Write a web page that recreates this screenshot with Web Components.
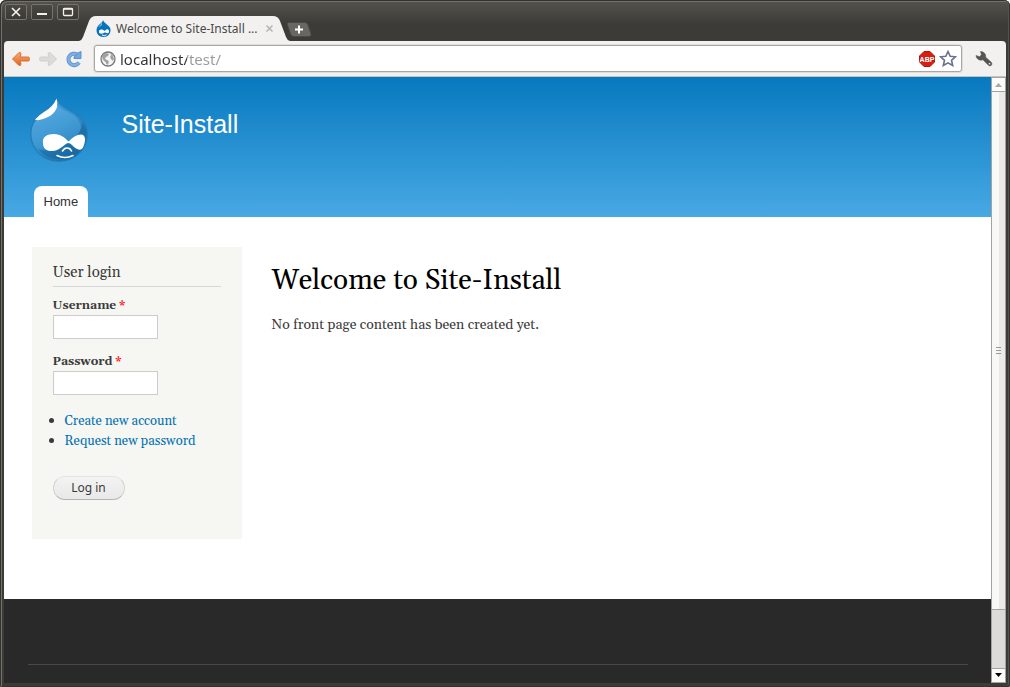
<!DOCTYPE html>
<html lang="en">
<head>
<meta charset="utf-8">
<meta name="viewport" content="width=device-width, initial-scale=1">
<title>Welcome to Site-Install</title>
<style>
  body { margin: 0; background: #fff; }
</style>
</head>
<body>
<browser-window>
  <title-bar slot="chrome"><browser-tab>Welcome to Site-Install ...</browser-tab></title-bar>
  <tool-bar slot="chrome"></tool-bar>
  <site-header>Site-Install</site-header>
  <site-main>
    <login-block slot="sidebar"></login-block>
    <h1 slot="title">Welcome to Site-Install</h1>
    <p slot="content">No front page content has been created yet.</p>
  </site-main>
  <site-footer></site-footer>
</browser-window>
<script>
const define = (name, html) => customElements.define(name, class extends HTMLElement {
  constructor() {
    super();
    this.attachShadow({ mode: 'open' }).innerHTML = html;
  }
});

define('browser-window', `
<style>
  :host { display: flex; flex-direction: column; box-sizing: border-box; height: 100vh; padding: 0 4px 4px;
    background: linear-gradient(#55544e 0, #3c3b37 24px); border-radius: 6px 6px 2px 2px;
    box-shadow: inset 1px 1px #33322f, inset -1px -1px #33322f, inset 2px 2px #73726c, inset -2px -1px #55534f; overflow: hidden; }
  .viewport { flex: 1; min-height: 0; display: flex; }
  .page { flex: 1; min-width: 0; display: flex; flex-direction: column; overflow: hidden; background: #292929; }
</style>
<slot name="chrome"></slot>
<div class="viewport">
  <div class="page"><slot></slot></div>
  <scroll-bar></scroll-bar>
</div>`);

define('title-bar', `
<style>
  :host { display: flex; height: 41px; }
  .controls { display: flex; gap: 4px; padding: 4px 0 0 1px; }
  button { box-sizing: border-box; width: 22px; height: 16px; padding: 0; border: 1px solid #75736c; border-radius: 2px;
    background: linear-gradient(#484741, #3b3a36); display: grid; place-items: center; }
  .tabs { display: flex; align-items: flex-end; }
  .new { width: 26px; height: 15px; border: 0; background: none; margin: 0 0 4px -4px; }
  svg { display: block; }
</style>
<div class="controls">
  <button aria-label="Close"><svg width="20" height="14"><path d="M6 3L14 11M14 3L6 11" stroke="#f2f1ef" stroke-width="1.7"/></svg></button>
  <button aria-label="Minimize"><svg width="20" height="14"><path d="M5 9H15" stroke="#f2f1ef" stroke-width="2"/></svg></button>
  <button aria-label="Maximize"><svg width="20" height="14"><rect x="5.500" y="3.500" width="9" height="7" rx="1" fill="none" stroke="#f2f1ef" stroke-width="1.300"/><path d="M5 4H15" stroke="#f2f1ef" stroke-width="1.500"/></svg></button>
</div>
<div class="tabs">
  <slot></slot>
  <button class="new" aria-label="New tab"><svg width="26" height="15" viewBox="0 0 26 15"><path d="M3 .5H19Q21 .5 22 3L25 12Q25.500 14.500 23 14.500H8Q5.500 14.500 4.500 12L1.500 3Q.500 .5 3 .5Z" fill="#686762" stroke="#4b4a46"/><path d="M9 7.500H17M13 3.500V11.500" stroke="#fff" stroke-width="2"/></svg></button>
</div>`);

define('browser-tab', `
<style>
  :host { position: relative; display: flex; align-items: center; box-sizing: border-box; width: 211px; height: 25px; padding: 0 16px 0 17px; gap: 5px;
    font: 12px/24px "Noto Sans", sans-serif; color: #494949; white-space: nowrap; }
  .shape { position: absolute; inset: 0; width: 100%; height: 100%; }
  .icon, .label, button { position: relative; }
  .icon { flex: none; }
  .label { flex: 1; }
  button { width: 9px; height: 9px; padding: 0; border: 0; background: none; }
  svg { display: block; }
</style>
<svg class="shape" viewBox="0 0 211 25" preserveAspectRatio="none"><path d="M0 25Q3 24 4 21L10 5Q12 0 17 0H194Q199 0 201 5L207 21Q208 24 211 25Z" fill="#f2f1f0"/></svg>
<svg class="icon" width="15" height="17" viewBox="0 0 15 17"><path d="M7 0C7 3 1 4 .5 10C.5 14 3 17 7.500 17C12 17 14.500 14 14.500 10C14.500 5 8 4 7 0Z" fill="#0673ba"/><path d="M6 2Q5 5 2 7Q4 7 6 5Z" fill="#80bde4"/><path d="M3 12C3 9 6 9 8.500 11C11 8.500 13 9 13 11.500C13 14 11 13.500 9 12.200C7 14 3 14.500 3 12Z" fill="#fff"/><path d="M6 15Q8.500 16.500 10.500 14.700" fill="none" stroke="#fff"/></svg>
<span class="label"><slot></slot></span>
<button aria-label="Close tab"><svg width="9" height="9"><path d="M1.500 1.500L7.500 7.500M7.500 1.500L1.500 7.500" stroke="#b5b4b2" stroke-width="1.500"/></svg></button>`);

define('tool-bar', `
<style>
  :host { display: flex; align-items: center; box-sizing: border-box; height: 36px; padding: 0 13px 0 7px; gap: 8px;
    background: #f2f1f0; border-bottom: 1px solid #c5c3c0; border-radius: 4px 4px 0 0; }
  button { flex: none; padding: 0; border: 0; background: none; }
  svg { display: block; }
  .nav { display: flex; align-items: center; gap: 7px; }
  .address { flex: 1; min-width: 0; box-sizing: border-box; height: 27px; display: flex; align-items: center; gap: 4px; padding: 0 4px 0 5px;
    border: 1px solid #a9a7a3; border-radius: 3px; background: #fff; margin: 0 5px 0 3px; box-shadow: 0 0 0 1px #e0deda; }
  input { flex: 1; min-width: 0; height: 22px; padding: 0; border: 0; outline: 0; font: 15px/22px "Noto Sans", sans-serif; color: #333;
    -webkit-text-fill-color: transparent; background: linear-gradient(90deg, #333 67px, #999 67px); -webkit-background-clip: text; background-clip: text; }
</style>
<div class="nav">
<button aria-label="Back"><svg width="20" height="18" viewBox="0 0 20 18"><defs><linearGradient id="o" x2="0" y2="1"><stop stop-color="#f9b07c"/><stop offset="1" stop-color="#e0601a"/></linearGradient></defs><path d="M1.500 9L7.500 3Q10 1.500 10 4L9 7H17Q18.500 7 18.500 8.500V9.500Q18.500 11 17 11H9L10 14Q10 16.500 7.500 15Z" fill="url(#o)" stroke="#dd7034" stroke-linejoin="round"/></svg></button>
<button aria-label="Forward"><svg width="20" height="18" viewBox="0 0 20 18"><path d="M18.500 9L12.500 3Q10 1.500 10 4L11 7H3Q1.500 7 1.500 8.500V9.500Q1.500 11 3 11H11L10 14Q10 16.500 12.500 15Z" fill="#dcdbd8" stroke="#d0cfcc" stroke-linejoin="round"/></svg></button>
<button aria-label="Reload"><svg width="18" height="18" viewBox="0 0 18 18"><path d="M12.500 4.800A5.700 5.700 0 1 0 14 12.500" fill="none" stroke="#5b92cd" stroke-width="4"/><path d="M12.500 4.800A5.700 5.700 0 1 0 14 12.500" fill="none" stroke="#80b0e2" stroke-width="2.400"/><path d="M16 1.500V8.500H9V7L11.500 5L13.500 2.500Z" fill="#75a8dc" stroke="#5b92cd"/></svg></button>
</div>
<div class="address">
  <svg width="16" height="16" viewBox="0 0 16 16"><circle cx="8" cy="8" r="7" fill="#f4f4f4" stroke="#777" stroke-width="1.300"/><path d="M2 6Q3 2.500 7 2L9 3L8 5L6 6L5 8L8 9.500L9 11L7.500 14Q6 13 5.500 11L3 9ZM10.500 2.500L13 4.500L14 8L12.500 10L11 8L10 6L11 4.500Z" fill="#a2a2a2"/></svg>
  <input type="text" aria-label="Address" value="localhost/test/" spellcheck="false">
  <svg width="16" height="16" viewBox="0 0 16 16"><path d="M5 .5H11L15.500 5V11L11 15.500H5L.5 11V5Z" fill="#d32013" stroke="#b2170d"/><text x="8" y="11" text-anchor="middle" fill="#fff" font-family="Liberation Sans, sans-serif" font-size="7" font-weight="700">ABP</text></svg>
  <button aria-label="Bookmark this page"><svg width="18" height="17" viewBox="0 0 18 17"><path d="M9 1.500L11.200 6.300L16.500 6.800L12.500 10.300L13.700 15.500L9 12.800L4.300 15.500L5.500 10.300L1.500 6.800L6.800 6.300Z" fill="#fff" stroke="#68728c" stroke-width="1.600"/></svg></button>
</div>
<button aria-label="Customize"><svg width="18" height="18" viewBox="0 0 18 18"><path d="M5.500 1.500A5 5 0 0 1 10.700 7.200L16.500 12.500Q17.500 14 16.300 15.300Q15 16.500 13.500 15.300L8 9.800A5 5 0 0 1 1 5.500L4.500 6.700L6.500 4.800Z" fill="#555" stroke="#555" stroke-width=".6"/><circle cx="14.500" cy="13.700" r=".9" fill="#ddd"/></svg></button>`);

define('scroll-bar', `
<style>
  :host { display: flex; flex-direction: column; box-sizing: border-box; width: 15px; border: 1px solid #a5a3a0; background: #dcdbd9; }
  button { flex: none; height: 13px; padding: 0; border: 0; background: #fbfbfa; display: grid; place-items: center; }
  .thumb { flex: 1; display: grid; place-items: center; background: linear-gradient(90deg, #f8f8f7 50%, #ebeae9 50%); border: solid #a5a3a0; border-width: 1px 0; }
  .track { flex: 0 0 58px; }
  .down { height: 14px; border-top: 1px solid #a5a3a0; }
</style>
<button aria-label="Scroll up"><svg width="9" height="5"><path d="M1 5L4.500 1L8 5Z" fill="#aaa8a5"/></svg></button>
<div class="thumb"><svg width="5" height="8"><path d="M0 .5H5M0 3.500H5M0 6.500H5" stroke="#999"/></svg></div>
<div class="track"></div>
<button class="down" aria-label="Scroll down"><svg width="9" height="5"><path d="M1 0H8L4.500 4Z" fill="#000"/></svg></button>`);

define('site-header', `
<style>
  :host { display: block; flex: none; background: linear-gradient(#0779bf, #48a9e4); font-family: "Liberation Sans", Arial, sans-serif; }
  .inner { max-width: 942px; margin: 0 auto; }
  .brand { display: flex; gap: 34px; padding: 20px 0 0 3px; height: 89px; }
  .name { margin: 12px 0 0; font-size: 25px; line-height: 30px; color: #fff; text-decoration: none; }
  nav { display: flex; padding-left: 7px; }
  nav a { padding: 0 10px; font-size: 13px; line-height: 31px; color: #333; background: #fff; border-radius: 8px 8px 0 0; text-decoration: none; }
  svg { display: block; }
</style>
<div class="inner">
  <div class="brand">
    <a href="#" aria-label="Home"><svg width="58" height="65" viewBox="0 0 58 65">
      <defs><linearGradient id="d" x1="0" y1="0" x2=".7" y2="1"><stop stop-color="#3b9bd7"/><stop offset=".55" stop-color="#3191ce"/><stop offset="1" stop-color="#1a6ca5"/></linearGradient>
      <linearGradient id="g" x1=".2" y1=".2" x2=".5" y2="1"><stop stop-color="#5fade0"/><stop offset="1" stop-color="#3995d0"/></linearGradient></defs>
      <path d="M26.500 .8C28 7 34 10 42 14.500C53 21 57.200 28 57.200 37C57.200 53 45 64.200 29 64.200C12 64.200 .8 52 .8 37C.8 27 6 20 14 14.500C21 10 25.500 7 26.500 .8Z" fill="url(#d)" stroke="#2877ae"/>
      <path d="M27 7C30 12 37 14 43 18C54 26 52 34 46 40C36 49 18 55 7 51C0 43 0 30 7 22C13 17 20 14 27 7Z" fill="url(#g)" opacity=".65"/>
      <path d="M56 33C56 51 45 62 29 62Q16 62 9 53C25 56 48 48 53 25Z" fill="#176397" opacity=".5"/>
      <path d="M26.500 1.500Q28 5 27 10C25 17 19 20 13 22Q8 24 5 22.500Q9 18 14 15Q23 10 26.500 1.500Z" fill="#fff"/>
      <path d="M13 46C12 40 17 37 24 37C31 37 35 41 38.500 44.500C43 40 47 37.500 51 37.500C55 37.500 56 42 54 48C52 54 49 54 44 50C42 48 40 46 38 46C34 47 31 53 23 54C17 54.500 13 52 13 46Z" fill="#fff"/>
      <path d="M32.500 54Q34.500 50.500 37.500 51Q40 51 41.500 54M27 58.500Q35 62.500 43 58.500" fill="none" stroke="#fff" stroke-width="1.600" stroke-linecap="round"/>
    </svg></a>
    <a class="name" href="#"><slot></slot></a>
  </div>
  <nav><a href="#">Home</a></nav>
</div>`);

define('site-main', `
<style>
  :host { display: block; flex: none; background: #fff; font-family: Georgia, Gelasio, "Liberation Serif", serif; color: #3b3b3b; }
  .inner { display: flex; gap: 30px; max-width: 942px; margin: 0 auto; padding: 30px 0 60px 5px; box-sizing: border-box; }
  ::slotted([slot=sidebar]) { flex: none; width: 210px; }
  main { flex: 1; min-width: 0; padding-top: 14px; }
  ::slotted(h1) { margin: 0; font-size: 28px; line-height: 40px; font-weight: 400; color: #000; }
  ::slotted(p) { margin: 14px 0 0; font-size: 14px; line-height: 20px; }
</style>
<div class="inner">
  <slot name="sidebar"></slot>
  <main><slot name="title"></slot><slot name="content"></slot></main>
</div>`);

define('login-block', `
<style>
  :host { display: block; box-sizing: border-box; padding: 15px 21px 39px; background: #f6f6f2; }
  h2 { margin: 0 0 11px; padding-bottom: 2px; border-bottom: 1px solid #d6d6d6; font-size: 15px; line-height: 22px; font-weight: 400; }
  label { display: block; font-size: 12px; line-height: 16px; font-weight: 700; }
  label span { color: #f00; }
  input { display: block; box-sizing: border-box; width: 105px; height: 24px; margin: 1px 0 15px; padding: 2px; border: 1px solid #ccc; background: #fff; }
  ul { margin: 0; padding: 1px 0 0 12px; font-size: 13px; line-height: 20px; }
  li::marker { font-size: 15px; }
  a { color: #0071b3; text-decoration: none; }
  button { height: 24px; margin: 25px 0 0; padding: 0 17px; border: 1px solid #e4e4e4; border-bottom-color: #b4b4b4; border-left-color: #d2d2d2; border-right-color: #d2d2d2;
    border-radius: 12px; background: linear-gradient(#f3f3f3, #e8e8e8); color: #3a3a3a; font: 12px/20px "Noto Sans", sans-serif; display: block; min-width: 72px; }
</style>
<form>
  <h2>User login</h2>
  <label for="name">Username <span>*</span></label>
  <input id="name" type="text">
  <label for="pass">Password <span>*</span></label>
  <input id="pass" type="password">
  <ul><li><a href="#">Create new account</a></li><li><a href="#">Request new password</a></li></ul>
  <button type="button">Log in</button>
</form>`);

define('site-footer', `
<style>
  :host { display: block; flex: none; padding: 65px 0 20px; background: #292929; }
  hr { max-width: 940px; height: 1px; margin: 0 auto; border: 0; background: #484848; }
</style>
<hr>`);
</script>
</body>
</html>
